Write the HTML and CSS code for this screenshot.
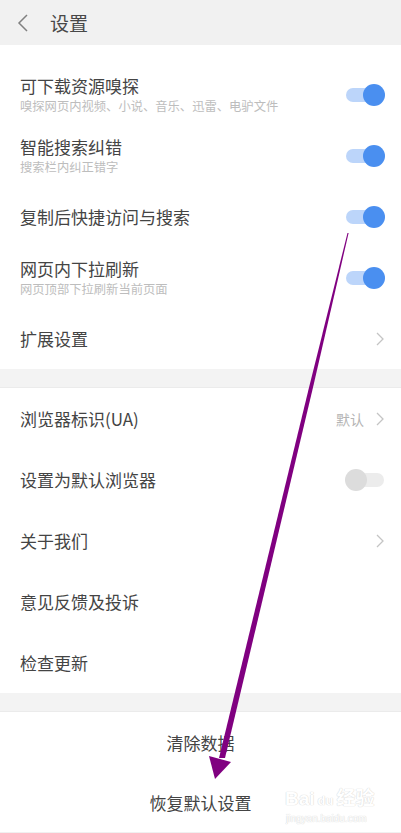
FILE: index.html
```html
<!DOCTYPE html>
<html lang="zh">
<head>
    <meta charset="UTF-8">
    <meta name="viewport" content="width=device-width, initial-scale=1.0">
    <title>设置</title>
    <link rel="stylesheet" href="styles.css">
</head>
<body>

    <!-- Top bar -->
    <div class="topbar">
        <svg class="back" width="14" height="20" viewBox="0 0 14 20">
            <path d="M11 2 L3 10 L11 18" fill="none" stroke="#808080" stroke-width="1.5"/>
        </svg>
        <span class="topbar-title">设置</span>
    </div>

    <!-- Section 1 -->
    <div class="group group-first">
        <div class="row">
            <div class="row-text">
                <div class="row-title">可下载资源嗅探</div>
                <div class="row-sub">嗅探网页内视频、小说、音乐、迅雷、电驴文件</div>
            </div>
            <span class="switch on"></span>
        </div>
        <div class="row">
            <div class="row-text">
                <div class="row-title">智能搜索纠错</div>
                <div class="row-sub">搜索栏内纠正错字</div>
            </div>
            <span class="switch on"></span>
        </div>
        <div class="row">
            <div class="row-text">
                <div class="row-title">复制后快捷访问与搜索</div>
            </div>
            <span class="switch on"></span>
        </div>
        <div class="row">
            <div class="row-text">
                <div class="row-title">网页内下拉刷新</div>
                <div class="row-sub">网页顶部下拉刷新当前页面</div>
            </div>
            <span class="switch on"></span>
        </div>
        <div class="row">
            <div class="row-text">
                <div class="row-title">扩展设置</div>
            </div>
            <svg class="chev" width="10" height="16" viewBox="0 0 10 16">
                <path d="M2 2 L8 8 L2 14" fill="none" stroke="#c4c4c4" stroke-width="1.3"/>
            </svg>
        </div>
    </div>

    <div class="band"></div>

    <!-- Section 2 -->
    <div class="group">
        <div class="row">
            <div class="row-text">
                <div class="row-title">浏览器标识(UA)</div>
            </div>
            <span class="row-value">默认</span>
            <svg class="chev" width="10" height="16" viewBox="0 0 10 16">
                <path d="M2 2 L8 8 L2 14" fill="none" stroke="#c4c4c4" stroke-width="1.3"/>
            </svg>
        </div>
        <div class="row">
            <div class="row-text">
                <div class="row-title">设置为默认浏览器</div>
            </div>
            <span class="switch"></span>
        </div>
        <div class="row">
            <div class="row-text">
                <div class="row-title">关于我们</div>
            </div>
            <svg class="chev" width="10" height="16" viewBox="0 0 10 16">
                <path d="M2 2 L8 8 L2 14" fill="none" stroke="#c4c4c4" stroke-width="1.3"/>
            </svg>
        </div>
        <div class="row">
            <div class="row-text">
                <div class="row-title">意见反馈及投诉</div>
            </div>
        </div>
        <div class="row">
            <div class="row-text">
                <div class="row-title">检查更新</div>
            </div>
        </div>
    </div>

    <div class="band"></div>

    <!-- Bottom actions -->
    <div class="actions">
        <div class="action">清除数据</div>
        <div class="action">恢复默认设置</div>
    </div>
    <div class="bottom-line"></div>

    <!-- Watermark -->
    <div class="watermark">
        <div class="wm-logo">Bai<span class="wm-du">du</span>经验</div>
        <div class="wm-url">jingyan.baidu.com</div>
    </div>

    <!-- Annotation arrow -->
    <svg class="arrow" width="401" height="833" viewBox="0 0 401 833">
        <polygon points="347.5,233 348.6,233 312.4,390 225,758 219,758 308.4,390" fill="#800080"/>
        <polygon points="209,756 231,762 215,779" fill="#800080"/>
    </svg>

</body>
</html>
```

FILE: styles.css
```css
body {
    margin: 0;
    width: 401px;
    height: 833px;
    background: #ffffff;
    font-family: "Noto Sans CJK SC", "Noto Sans", sans-serif;
    color: #424242;
    position: relative;
    overflow: hidden;
}

.topbar {
    height: 45px;
    background: #f1f1f1;
    display: flex;
    align-items: center;
    padding-left: 16px;
    box-shadow: 0 1px 1px rgba(0, 0, 0, 0.04);
}

.back {
    margin-right: 20px;
}

.topbar-title {
    font-size: 19px;
    color: #484848;
}

.group {
    background: #ffffff;
}

.group-first {
    padding-top: 19px;
}

.row {
    height: 61px;
    display: flex;
    align-items: center;
    padding: 0 16px 0 20px;
}

.row-text {
    flex: 1;
}

.row-title {
    font-size: 17px;
    line-height: 20px;
    color: #444444;
}

.row-sub {
    font-size: 12.3px;
    line-height: 16px;
    margin-top: 2px;
    color: #bdbdbd;
}

.row-value {
    font-size: 14px;
    color: #b4b4b4;
    margin-right: 11px;
}

.switch {
    position: relative;
    width: 38px;
    height: 14px;
    border-radius: 7px;
    background: #ececec;
    margin-right: 1px;
}

.switch::after {
    content: "";
    position: absolute;
    top: -4px;
    left: -1px;
    width: 22px;
    height: 22px;
    border-radius: 50%;
    background: #dcdcdc;
}

.switch.on {
    background: #bcd5fa;
}

.switch.on::after {
    left: auto;
    right: -1px;
    background: #4a8ff0;
}

.band {
    height: 18px;
    background: #f3f3f3;
    border-bottom: 1px solid #ebebeb;
}

.actions {
    display: flex;
    flex-direction: column;
}

.action {
    height: 60px;
    display: flex;
    align-items: center;
    justify-content: center;
    font-size: 17px;
    color: #444444;
}

.bottom-line {
    height: 3px;
    background: #f0f0f0;
}

.watermark {
    position: absolute;
    left: 285px;
    top: 788px;
    color: #ffffff;
    text-shadow: 0 0 1px #d6d6d6, 0 0 1px #d6d6d6;
    font-family: "Liberation Sans", "Noto Sans CJK SC", sans-serif;
}

.wm-logo {
    font-size: 19px;
    line-height: 22px;
    font-weight: bold;
}

.wm-du {
    font-size: 13px;
    margin: 0 3px;
}

.wm-url {
    font-size: 10px;
    line-height: 14px;
    margin-left: 1px;
}

.arrow {
    position: absolute;
    left: 0;
    top: 0;
}
```
